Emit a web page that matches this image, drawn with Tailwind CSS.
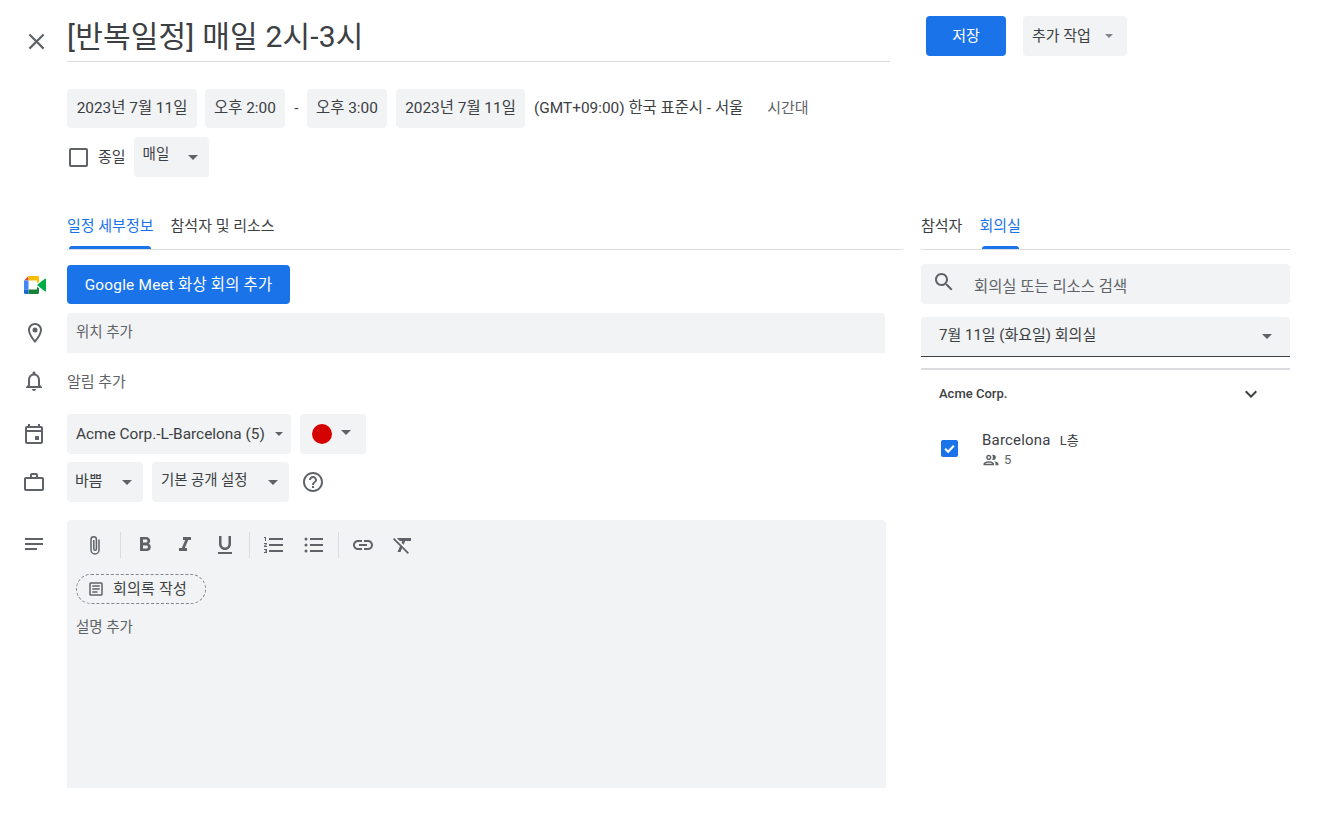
<!DOCTYPE html>
<html lang="ko">
<head>
  <meta charset="UTF-8" />
  <title>[반복일정] 매일 2시-3시</title>
  <script src="https://cdn.jsdelivr.net/npm/@tailwindcss/browser@4"></script>
</head>
<body class="bg-white text-[#3c4043] text-[15px] font-['Roboto','Noto_Sans_CJK_KR',sans-serif] w-[1325px] h-[840px] overflow-hidden">

  <!-- 상단: 제목 / 저장 -->
  <header class="flex items-start pt-4 h-[89px]">
    <div class="w-[67px] h-[46px] flex items-center justify-end pr-[17px] mt-[2px]">
      <svg class="w-[27px] h-[27px] text-[#5f6368]" viewBox="0 0 24 24" fill="currentColor"><path d="M19 6.41 17.59 5 12 10.59 6.41 5 5 6.41 10.59 12 5 17.59 6.41 19 12 13.41 17.59 19 19 17.59 13.41 12z"/></svg>
    </div>
    <div class="w-[823px] h-[46px] border-b border-[#dadce0] text-[30px] leading-[42px] tracking-[.2px] text-[#3c4043] whitespace-nowrap">[반복일정] 매일 2시-3시</div>
    <button class="ml-9 w-20 h-10 rounded bg-[#1a73e8] text-white">저장</button>
    <button class="ml-[17px] w-[104px] h-10 rounded bg-[#f1f3f4] text-[#3c4043] flex items-center pl-[9px]">
      추가 작업
      <span class="ml-[14px] w-0 h-0 border-x-[4px] border-x-transparent border-t-[4px] border-t-[#80868b]"></span>
    </button>
  </header>

  <!-- 날짜 / 시간 -->
  <div class="pl-[67px] flex items-center h-[39px] text-[15.4px]">
    <div class="h-[39px] w-[130px] rounded bg-[#f1f3f4] flex items-center justify-center">2023년 7월 11일</div>
    <div class="h-[39px] w-20 ml-2 rounded bg-[#f1f3f4] flex items-center justify-center">오후 2:00</div>
    <span class="w-[22px] text-center pl-[1px]">-</span>
    <div class="h-[39px] w-20 rounded bg-[#f1f3f4] flex items-center justify-center">오후 3:00</div>
    <div class="h-[39px] w-[129px] ml-[9px] rounded bg-[#f1f3f4] flex items-center justify-center">2023년 7월 11일</div>
    <span class="ml-[9px]">(GMT+09:00) 한국 표준시 - 서울</span>
    <span class="ml-6 text-[#5f6368] text-[15px]">시간대</span>
  </div>

  <div class="pl-[67px] mt-[9px] flex items-center h-10">
    <span class="ml-[2px] w-[19px] h-[19px] rounded-[2px] border-2 border-[#5f6368]"></span>
    <span class="ml-[10px]">종일</span>
    <div class="ml-2 w-[75px] h-10 rounded bg-[#f1f3f4] flex items-center justify-between pl-[9px] pr-[11px]">
      <span class="-mt-1 text-[14.5px]">매일</span>
      <span class="w-0 h-0 border-x-[5px] border-x-transparent border-t-[5px] border-t-[#5f6368]"></span>
    </div>
  </div>

  <div class="flex mt-7">
    <!-- 왼쪽: 일정 세부정보 -->
    <main class="w-[903px]">
      <div class="ml-[67px] h-[45px] flex items-end gap-[17px] border-b border-[#dadce0]">
        <div class="h-full flex flex-col items-center justify-between pt-[10px]">
          <span class="text-[#1a73e8]">일정 세부정보</span>
          <span class="w-[82px] h-[3px] rounded-t-[3px] bg-[#1a73e8]"></span>
        </div>
        <div class="h-full pt-[10px]">참석자 및 리소스</div>
      </div>

      <div class="mt-[15px] flex items-center h-[39px]">
        <div class="w-[67px] pl-[24px]">
          <svg class="w-[22px] h-[18px]" viewBox="0 0 22 18">
            <path fill="#ea4335" d="M4.5 0v4.5H0z"/>
            <path fill="#fbbc04" d="M4.5 0H13.5q1.5 0 1.5 1.5V6L13 7V4.5H4.5z"/>
            <path fill="#4285f4" d="M0 4.5h4.5v9H0z"/>
            <path fill="#188038" d="M13 11l2 1v4.5q0 1.5-1.5 1.5H4.5v-4.5H13z"/>
            <path fill="#1967d2" d="M0 13.5h4.5V18H1.5Q0 18 0 16.5z"/>
            <path fill="#00ac47" d="M13 9l3-2.5 4.5-3.5q1.5-1 1.5.5v11q0 1.5-1.5.5L16 11.500z"/>
          </svg>
        </div>
        <button class="w-[223px] h-[39px] pt-[2px] rounded bg-[#1a73e8] text-white text-[15.4px] tracking-[.2px]">Google Meet 화상 회의 추가</button>
      </div>

      <div class="mt-[9px] flex items-center h-10">
        <div class="w-[67px] pl-[23px]">
          <svg class="w-6 h-6 text-[#5f6368]" viewBox="0 0 24 24" fill="currentColor"><path d="M12 2C8.13 2 5 5.13 5 9c0 5.25 7 13 7 13s7-7.750 7-13c0-3.870-3.130-7-7-7zm0 17.100C9.900 16.400 7 12 7 9c0-2.760 2.240-5 5-5s5 2.240 5 5c0 3-2.900 7.400-5 10.100z"/><circle cx="12" cy="9" r="2.500"/></svg>
        </div>
        <div class="w-[818px] h-10 rounded-t bg-[#f1f3f4] pl-[9px] leading-[40px] text-[14.5px] text-[#5f6368]">위치 추가</div>
      </div>

      <div class="mt-[8px] flex items-center h-10">
        <div class="w-[67px] pl-[22px]">
          <svg class="w-6 h-6 text-[#5f6368]" viewBox="0 0 24 24" fill="currentColor"><path d="M12 22c1.100 0 2-.9 2-2h-4c0 1.100.9 2 2 2zm6-6v-5c0-3.070-1.630-5.640-4.500-6.320V4c0-.83-.67-1.500-1.500-1.500s-1.500.67-1.500 1.500v.68C7.640 5.360 6 7.920 6 11v5l-2 2v1h16v-1l-2-2zm-2 1H8v-6c0-2.480 1.510-4.500 4-4.500s4 2.020 4 4.500v6z"/></svg>
        </div>
        <span class="mt-[2px] text-[#5f6368]">알림 추가</span>
      </div>

      <div class="mt-[13px] flex items-center h-10">
        <div class="w-[67px] pl-[22px]">
          <svg class="w-6 h-6 text-[#5f6368]" viewBox="0 0 24 24" fill="currentColor"><path d="M19 4h-1V2h-2v2H8V2H6v2H5c-1.100 0-2 .9-2 2v14c0 1.100.9 2 2 2h14c1.100 0 2-.9 2-2V6c0-1.100-.9-2-2-2zm0 16H5V10h14v10zM5 8V6h14v2H5z"/><rect x="13" y="14" width="4" height="4" rx=".5"/></svg>
        </div>
        <div class="w-[224px] h-10 rounded bg-[#f1f3f4] flex items-center justify-between pl-[9px] pr-2">
          <span class="mt-[2px] text-[15.4px]">Acme Corp.-L-Barcelona (5)</span>
          <span class="w-0 h-0 border-x-[4px] border-x-transparent border-t-[4px] border-t-[#5f6368]"></span>
        </div>
        <div class="ml-[9px] w-[66px] h-10 rounded bg-[#f1f3f4] flex items-center pl-3">
          <span class="w-5 h-5 rounded-full bg-[#d50000]"></span>
          <span class="ml-[9px] -mt-1 w-0 h-0 border-x-[5px] border-x-transparent border-t-[5px] border-t-[#5f6368]"></span>
        </div>
      </div>

      <div class="mt-2 flex items-center h-10">
        <div class="w-[67px] pl-[22px]">
          <svg class="w-6 h-6 text-[#5f6368]" viewBox="0 0 24 24" fill="currentColor"><path d="M20 7h-4V5c0-1.100-.9-2-2-2h-4c-1.100 0-2 .9-2 2v2H4c-1.100 0-2 .9-2 2v10c0 1.100.9 2 2 2h16c1.100 0 2-.9 2-2V9c0-1.100-.9-2-2-2zM10 5h4v2h-4V5zm10 14H4V9h16v10z"/></svg>
        </div>
        <div class="w-[76px] h-10 rounded bg-[#f1f3f4] flex items-center justify-between pl-2 pr-[11px]">
          <span class="-mt-[2px]">바쁨</span>
          <span class="w-0 h-0 border-x-[5px] border-x-transparent border-t-[5px] border-t-[#5f6368]"></span>
        </div>
        <div class="ml-[9px] w-[137px] h-10 rounded bg-[#f1f3f4] flex items-center justify-between pl-[9px] pr-[11px]">
          <span class="-mt-[2px] text-[14.4px]">기본 공개 설정</span>
          <span class="w-0 h-0 border-x-[5px] border-x-transparent border-t-[5px] border-t-[#5f6368]"></span>
        </div>
        <svg class="ml-[12px] w-6 h-6 text-[#5f6368]" viewBox="0 0 24 24" fill="currentColor"><path d="M11 18h2v-2h-2v2zm1-16C6.480 2 2 6.480 2 12s4.480 10 10 10 10-4.480 10-10S17.520 2 12 2zm0 18c-4.410 0-8-3.590-8-8s3.590-8 8-8 8 3.590 8 8-3.590 8-8 8zm0-14c-2.210 0-4 1.790-4 4h2c0-1.100.9-2 2-2s2 .9 2 2c0 2-3 1.750-3 5h2c0-2.250 3-2.500 3-5 0-2.210-1.790-4-4-4z"/></svg>
      </div>

      <div class="mt-[18px] flex items-start">
        <div class="w-[67px] pl-[22px] pt-3">
          <svg class="w-6 h-6 text-[#5f6368]" viewBox="0 0 24 24" fill="currentColor"><path d="M3 6h18v2H3zM3 11h18v2H3zM3 16h12v2H3z"/></svg>
        </div>
        <div class="w-[819px] h-[268px] rounded-t bg-[#f1f3f4] pl-[9px] pt-[13px] text-[#5f6368]">
          <!-- 서식 툴바 -->
          <div class="flex items-center h-6 -ml-[9px] pl-[16px] [&>svg]:shrink-0 [&>svg]:w-6 [&>svg]:h-6">
            <svg viewBox="0 0 24 24" fill="none" stroke="currentColor" stroke-width="1.500"><path d="M16 6.500V17a4 4 0 0 1-8 0V6.500a2.700 2.700 0 0 1 5.400 0V16a1.300 1.300 0 0 1-2.600 0V7"/></svg>
            <span class="ml-[13px] mr-[12px] w-px h-[26px] bg-[#dadce0]"></span>
            <svg viewBox="0 0 24 24" fill="currentColor"><path d="M15.600 10.790c.97-.67 1.650-1.770 1.650-2.790 0-2.260-1.750-4-4-4H7v14h7.040c2.090 0 3.710-1.700 3.710-3.790 0-1.520-.86-2.820-2.150-3.420zM10 6.500h3c.83 0 1.500.67 1.500 1.500s-.67 1.500-1.500 1.500h-3v-3zm3.500 9H10v-3h3.500c.83 0 1.500.67 1.500 1.500s-.67 1.500-1.500 1.500z"/></svg>
            <svg class="ml-[16px]" viewBox="0 0 24 24" fill="currentColor"><path d="M10 4v3h2.210l-3.420 8H6v3h8v-3h-2.210l3.420-8H18V4z"/></svg>
            <svg class="ml-[16px]" viewBox="0 0 24 24" fill="currentColor"><path d="M12 17c3.310 0 6-2.690 6-6V3h-2.500v8c0 1.930-1.570 3.500-3.500 3.500S8.500 12.930 8.500 11V3H6v8c0 3.310 2.690 6 6 6zm-7 2v2h14v-2H5z"/></svg>
            <span class="ml-[12px] mr-[12px] w-px h-[26px] bg-[#dadce0]"></span>
            <svg viewBox="0 0 24 24" fill="currentColor"><path d="M2 17h2v.5H3v1h1v.5H2v1h3v-4H2v1zm1-9h1V4H2v1h1v3zm-1 3h1.800L2 13.100v.9h3v-1H3.200L5 10.900V10H2v1zm5-6v2h14V5H7zm0 14h14v-2H7v2zm0-6h14v-2H7v2z"/></svg>
            <svg class="ml-[16px]" viewBox="0 0 24 24" fill="currentColor"><circle cx="4" cy="6" r="1.500"/><circle cx="4" cy="12" r="1.500"/><circle cx="4" cy="18" r="1.500"/><path d="M8 5h13v2H8zM8 11h13v2H8zM8 17h13v2H8z"/></svg>
            <span class="ml-[12px] mr-[12px] w-px h-[26px] bg-[#dadce0]"></span>
            <svg viewBox="0 0 24 24" fill="currentColor"><path d="M3.900 12c0-1.710 1.390-3.100 3.100-3.100h4V7H7c-2.760 0-5 2.240-5 5s2.240 5 5 5h4v-1.900H7c-1.710 0-3.100-1.390-3.100-3.100zM8 13h8v-2H8v2zm9-6h-4v1.900h4c1.710 0 3.100 1.390 3.100 3.100s-1.390 3.100-3.100 3.100h-4V17h4c2.760 0 5-2.240 5-5s-2.240-5-5-5z"/></svg>
            <svg class="ml-[16px]" viewBox="0 0 24 24" fill="currentColor"><path d="M3.270 5 2 6.270l6.970 6.970L6.500 19h3l1.570-3.660L16.730 21 18 19.730 3.550 5.270 3.270 5zM6 5v.18L8.820 8h2.400l-.72 1.680 2.100 2.100L14.210 8H20V5H6z"/></svg>
          </div>
          <div class="mt-[17px] w-[130px] h-[30px] rounded-full border border-dashed border-[#80868b] flex items-center pl-[10px] text-[#3c4043]">
            <svg class="w-[18px] h-[18px] text-[#5f6368]" viewBox="0 0 24 24" fill="currentColor"><path d="M19 3H5c-1.100 0-2 .9-2 2v14c0 1.100.9 2 2 2h14c1.100 0 2-.9 2-2V5c0-1.100-.9-2-2-2zm0 16H5V5h14v14zM7 7h10v2H7zm0 4h10v2H7zm0 4h7v2H7z"/></svg>
            <span class="ml-[8px] tracking-[.2px]">회의록 작성</span>
          </div>
          <div class="mt-[13px] text-[14.5px]">설명 추가</div>
        </div>
      </div>
    </main>

    <!-- 오른쪽: 회의실 -->
    <aside class="ml-[18px] w-[369px]">
      <div class="h-[45px] flex items-end gap-[17px] border-b border-[#dadce0]">
        <div class="h-full pt-[10px]">참석자</div>
        <div class="h-full flex flex-col items-center justify-between pt-[10px]">
          <span class="text-[#1a73e8]">회의실</span>
          <span class="w-[37px] h-[3px] rounded-t-[3px] bg-[#1a73e8]"></span>
        </div>
      </div>
      <div class="mt-[14px] h-10 rounded bg-[#f1f3f4] flex items-center pl-[11px] text-[#5f6368]">
        <svg class="w-6 h-6 -mt-1" viewBox="0 0 24 24" fill="currentColor"><path d="M15.500 14h-.79l-.28-.27C15.410 12.590 16 11.110 16 9.500 16 5.910 13.090 3 9.500 3S3 5.910 3 9.500 5.910 16 9.500 16c1.610 0 3.090-.59 4.230-1.570l.27.28v.79l5 4.990L20.490 19l-4.990-5zm-6 0C7.010 14 5 11.990 5 9.500S7.010 5 9.500 5 14 7.010 14 9.500 11.990 14 9.500 14z"/></svg>
        <span class="ml-[18px] mt-[8px] text-[15.4px]">회의실 또는 리소스 검색</span>
      </div>
      <div class="mt-[13px] h-10 rounded-t bg-[#f1f3f4] border-b border-[#3c4043] flex items-center justify-between pl-[18px] pr-[18px]">
        <span class="-mt-[2px]">7월 11일 (화요일) 회의실</span>
        <span class="w-0 h-0 border-x-[5px] border-x-transparent border-t-[5px] border-t-[#5f6368]"></span>
      </div>
      <div class="mt-[11px] h-[2px] bg-[#dadce0]"></div>
      <div class="mt-[14px] h-5 flex items-center justify-between pl-[18px] pr-[27px]">
        <span class="text-[13px] font-medium">Acme Corp.</span>
        <svg class="w-6 h-6" viewBox="0 0 24 24" fill="currentColor"><path d="M16.590 8.590 12 13.170 7.410 8.590 6 10l6 6 6-6z"/></svg>
      </div>
      <div class="mt-[27px] flex items-center pl-5">
        <span class="-mt-[2px] w-[17px] h-[17px] rounded-[2px] bg-[#1a73e8] flex items-center justify-center">
          <svg class="w-[13px] h-[13px] text-white" viewBox="0 0 24 24" fill="none" stroke="currentColor" stroke-width="4"><path d="M4 12.500l5.500 5.500L20 7"/></svg>
        </span>
        <div class="ml-6 -mt-[1px]">
          <div class="h-5 leading-5"><span class="tracking-[.2px]">Barcelona</span><span class="ml-[9px] text-[13px]">L층</span></div>
          <div class="h-4 mt-[2px] flex items-center text-[13px] text-[#5f6368]">
            <svg class="w-[18px] h-[18px]" viewBox="0 0 24 24" fill="currentColor"><path d="M9 13.750c-2.340 0-7 1.170-7 3.500V19h14v-1.750c0-2.330-4.660-3.500-7-3.500zM4.340 17c.84-.58 2.870-1.250 4.660-1.250s3.820.67 4.660 1.250H4.340zM9 12c1.930 0 3.500-1.570 3.500-3.500S10.930 5 9 5 5.500 6.570 5.500 8.500 7.070 12 9 12zm0-5c.83 0 1.500.67 1.500 1.500S9.830 10 9 10s-1.500-.67-1.500-1.500S8.170 7 9 7zm7.040 6.810c1.160.84 1.960 1.960 1.960 3.440V19h4v-1.750c0-2.020-3.500-3.170-5.960-3.440zM15 12c1.930 0 3.500-1.570 3.500-3.500S16.930 5 15 5c-.54 0-1.040.13-1.500.35.630.89 1 1.980 1 3.150s-.37 2.260-1 3.150c.46.22.96.35 1.500.35z"/></svg>
            <span class="ml-[4px]">5</span>
          </div>
        </div>
      </div>
    </aside>
  </div>
</body>
</html>
